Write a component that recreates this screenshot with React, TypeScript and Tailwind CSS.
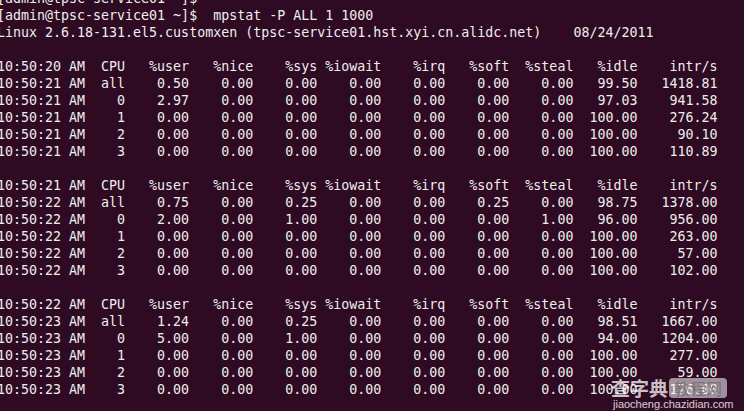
const cols = ["%user", "%nice", "%sys", "%iowait", "%irq", "%soft", "%steal", "%idle"];

type Row = [string, string[]];

const blocks: { head: string; time: string; rows: Row[] }[] = [
  {
    head: "10:50:20",
    time: "10:50:21",
    rows: [
      ["all", ["0.50", "0.00", "0.00", "0.00", "0.00", "0.00", "0.00", "99.50", "1418.81"]],
      ["0", ["2.97", "0.00", "0.00", "0.00", "0.00", "0.00", "0.00", "97.03", "941.58"]],
      ["1", ["0.00", "0.00", "0.00", "0.00", "0.00", "0.00", "0.00", "100.00", "276.24"]],
      ["2", ["0.00", "0.00", "0.00", "0.00", "0.00", "0.00", "0.00", "100.00", "90.10"]],
      ["3", ["0.00", "0.00", "0.00", "0.00", "0.00", "0.00", "0.00", "100.00", "110.89"]],
    ],
  },
  {
    head: "10:50:21",
    time: "10:50:22",
    rows: [
      ["all", ["0.75", "0.00", "0.25", "0.00", "0.00", "0.25", "0.00", "98.75", "1378.00"]],
      ["0", ["2.00", "0.00", "1.00", "0.00", "0.00", "0.00", "1.00", "96.00", "956.00"]],
      ["1", ["0.00", "0.00", "0.00", "0.00", "0.00", "0.00", "0.00", "100.00", "263.00"]],
      ["2", ["0.00", "0.00", "0.00", "0.00", "0.00", "0.00", "0.00", "100.00", "57.00"]],
      ["3", ["0.00", "0.00", "0.00", "0.00", "0.00", "0.00", "0.00", "100.00", "102.00"]],
    ],
  },
  {
    head: "10:50:22",
    time: "10:50:23",
    rows: [
      ["all", ["1.24", "0.00", "0.25", "0.00", "0.00", "0.00", "0.00", "98.51", "1667.00"]],
      ["0", ["5.00", "0.00", "1.00", "0.00", "0.00", "0.00", "0.00", "94.00", "1204.00"]],
      ["1", ["0.00", "0.00", "0.00", "0.00", "0.00", "0.00", "0.00", "100.00", "277.00"]],
      ["2", ["0.00", "0.00", "0.00", "0.00", "0.00", "0.00", "0.00", "100.00", "59.00"]],
      ["3", ["0.00", "0.00", "0.00", "0.00", "0.00", "0.00", "0.00", "100.00", "176.00"]],
    ],
  },
];

// mpstat pads every column to 8 chars, interrupts to 10
const line = (time: string, cpu: string, vals: string[]) =>
  `${time} AM  ${cpu.padStart(3)}` +
  vals.slice(0, 8).map((v) => v.padStart(8)).join("") +
  vals[8].padStart(10);

function buildLines() {
  const out: string[] = [
    "[admin@tpsc-service01 ~]$ ",
    "[admin@tpsc-service01 ~]$  mpstat -P ALL 1 1000",
    "Linux 2.6.18-131.el5.customxen (tpsc-service01.hst.xyi.cn.alidc.net) \t08/24/2011",
  ];
  for (const b of blocks) {
    out.push("");
    out.push(line(b.head, "CPU", [...cols, "intr/s"]));
    for (const [cpu, vals] of b.rows) out.push(line(b.time, cpu, vals));
  }
  return out;
}

export default function App() {
  const lines = buildLines();

  return (
    <div className="relative w-[744px] h-[411px] overflow-hidden bg-[#2e0a23]">
      <pre
        className="-mt-[10px] -ml-[3px] text-[13.3px] leading-[17px] text-[#eeeeec] whitespace-pre"
        style={{ tabSize: 8, fontFamily: '"DejaVu Sans Mono", "Liberation Mono", monospace' }}
      >
        {lines.map((l, i) => (
          <div key={i} className="h-[17px]">
            {l}
          </div>
        ))}
      </pre>

      {/* site watermark */}
      <div className="absolute left-[611px] top-[377px] flex flex-col items-start">
        <div className="flex items-center">
          <span
            className="text-[19px] leading-[21px] font-bold text-white/75"
            style={{ fontFamily: '"Noto Sans CJK SC", sans-serif' }}
          >
            查字典
          </span>
          <span
            className="ml-[1px] px-[5px] h-[20px] flex items-center rounded-[4px] bg-white/55 text-[16px] leading-[18px] text-[#6b6b6b]/80"
            style={{ fontFamily: '"Noto Sans CJK SC", sans-serif' }}
          >
            教程网
          </span>
        </div>
        <span
          className="ml-[2px] text-[11px] leading-[13px] text-white/80"
          style={{ fontFamily: '"Liberation Sans", Arial, sans-serif' }}
        >
          jiaocheng.chazidian.com
        </span>
      </div>
    </div>
  );
}
